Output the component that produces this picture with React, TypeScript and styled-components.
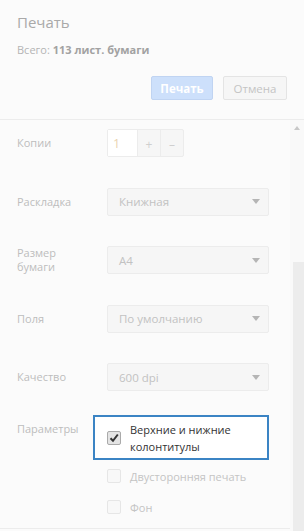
import styled, { createGlobalStyle } from "styled-components";

const GlobalStyle = createGlobalStyle`
  html, body {
    margin: 0;
    padding: 0;
    background: #fbfbfb;
    font-family: "Open Sans", "Noto Sans", sans-serif;
    overflow: hidden;
  }
`;

const Dialog = styled.div`
  width: 304px;
  height: 531px;
  display: flex;
  flex-direction: column;
  background: #fbfbfb;
`;

const Header = styled.div`
  padding: 12px 17px 0 17px;
  height: 107px;
  border-bottom: 1px solid #ececec;
`;

const Title = styled.div`
  font-size: 15px;
  color: #a9a9a9;
  line-height: 20px;
`;

const Summary = styled.div`
  margin-top: 10px;
  font-size: 11px;
  color: #b4b4b4;
  line-height: 16px;
  b {
    color: #a2a2a2;
    font-weight: 700;
  }
`;

const Actions = styled.div`
  display: flex;
  justify-content: flex-end;
  gap: 10px;
  margin-top: 18px;
`;

const Button = styled.div<{ $primary?: boolean }>`
  height: 24px;
  box-sizing: border-box;
  width: ${(p) => (p.$primary ? "62px" : "64px")};
  border-radius: 2px;
  display: flex;
  align-items: center;
  justify-content: center;
  font-size: 11.5px;
  font-weight: ${(p) => (p.$primary ? 700 : 400)};
  color: ${(p) => (p.$primary ? "#ffffff" : "#c4c4c4")};
  background: ${(p) => (p.$primary ? "#cde0fb" : "#f6f6f6")};
  border: 1px solid ${(p) => (p.$primary ? "#c0d4f2" : "#e4e4e4")};
`;

const Body = styled.div`
  flex: 1;
  display: flex;
  min-height: 0;
`;

const Content = styled.div`
  width: 290px;
  padding-top: 9px;
  border-bottom: 1px solid #ececec;
  height: 399px;
`;

const Row = styled.div<{ $top?: boolean; $gap?: number }>`
  display: grid;
  grid-template-columns: 90px 162px;
  align-items: ${(p) => (p.$top ? "start" : "center")};
  padding-left: 17px;
  min-height: 28px;
  margin-bottom: ${(p) => p.$gap ?? 30.5}px;
`;

const Label = styled.div<{ $pad?: number }>`
  font-size: 11px;
  color: #bdbdbd;
  line-height: 14px;
  padding-top: ${(p) => p.$pad ?? 0}px;
`;

const Copies = styled.div`
  display: flex;
  height: 28px;
  width: 77px;
  border: 1px solid #ececec;
  border-radius: 2px;
  box-sizing: border-box;
  background: #f6f6f6;
`;

const CopiesInput = styled.div`
  width: 30px;
  background: #ffffff;
  font-size: 12.5px;
  color: #ead3b0;
  padding-left: 5px;
  display: flex;
  align-items: center;
  box-sizing: border-box;
  border-right: 1px solid #ececec;
`;

const StepButton = styled.div<{ $last?: boolean }>`
  flex: 1;
  display: flex;
  align-items: center;
  justify-content: center;
  font-size: 12px;
  color: #cfcfcf;
  padding-top: 3px;
  border-right: ${(p) => (p.$last ? "none" : "1px solid #ececec")};
`;

const Select = styled.div`
  height: 28px;
  box-sizing: border-box;
  border: 1px solid #ececec;
  border-radius: 2px;
  background: #f6f6f6;
  display: flex;
  align-items: center;
  justify-content: space-between;
  padding: 0 8px 0 11px;
  font-size: 11.5px;
  color: #c2c2c2;
`;

const Arrow = styled.span`
  width: 0;
  height: 0;
  border-left: 4px solid transparent;
  border-right: 4px solid transparent;
  border-top: 5px solid #b5b5b5;
`;

const Options = styled.div`
  display: flex;
  flex-direction: column;
  margin-left: -14px;
`;

const Highlight = styled.div`
  border: 2px solid #3b84c4;
  background: #ffffff;
  width: 176px;
  box-sizing: border-box;
  height: 45px;
  display: flex;
  align-items: center;
  padding-left: 12px;
  gap: 9px;
`;

const Option = styled.div`
  display: flex;
  align-items: center;
  gap: 9px;
  height: 30px;
  padding-left: 14px;
  margin-top: 1px;
  font-size: 11px;
  color: #c4c4c4;
`;

const Box = styled.span<{ $checked?: boolean }>`
  width: 12px;
  height: 12px;
  flex: none;
  border: 1px solid ${(p) => (p.$checked ? "#aaaaaa" : "#e6e6e6")};
  border-radius: 2px;
  background: ${(p) => (p.$checked ? "#e4e4e4" : "#f8f8f8")};
  display: flex;
  align-items: center;
  justify-content: center;
`;

const HighlightText = styled.div`
  font-size: 11px;
  color: #333333;
  line-height: 17px;
`;

const Scrollbar = styled.div`
  width: 14px;
  background: #f9f9f9;
  display: flex;
  flex-direction: column;
  align-items: flex-end;
`;

const ScrollArrow = styled.span`
  margin: 6px 4px 0 0;
  width: 0;
  height: 0;
  border-left: 3px solid transparent;
  border-right: 3px solid transparent;
  border-bottom: 4px solid #c8c8c8;
`;

const Thumb = styled.div`
  margin-top: 132px;
  width: 11px;
  flex: 1;
  background: #ececec;
`;

function Check() {
  return (
    <svg width="10" height="10" viewBox="0 0 10 10">
      <path d="M1.5 5.2 L4 7.8 L8.8 1.5" fill="none" stroke="#333" strokeWidth="2" />
    </svg>
  );
}

function Dropdown({ value }: { value: string }) {
  return (
    <Select>
      {value}
      <Arrow />
    </Select>
  );
}

export default function App() {
  return (
    <>
      <GlobalStyle />
      <Dialog>
        <Header>
          <Title>Печать</Title>
          <Summary>
            Всего: <b>113 лист. бумаги</b>
          </Summary>
          <Actions>
            <Button $primary>Печать</Button>
            <Button>Отмена</Button>
          </Actions>
        </Header>
        <Body>
          <Content>
            <Row>
              <Label>Копии</Label>
              <Copies>
                <CopiesInput>1</CopiesInput>
                <StepButton>+</StepButton>
                <StepButton $last>–</StepButton>
              </Copies>
            </Row>
            <Row>
              <Label>Раскладка</Label>
              <Dropdown value="Книжная" />
            </Row>
            <Row>
              <Label>
                Размер
                <br />
                бумаги
              </Label>
              <Dropdown value="A4" />
            </Row>
            <Row>
              <Label>Поля</Label>
              <Dropdown value="По умолчанию" />
            </Row>
            <Row $gap={24}>
              <Label>Качество</Label>
              <Dropdown value="600 dpi" />
            </Row>
            <Row $top>
              <Label $pad={7}>Параметры</Label>
              <Options>
                <Highlight>
                  <Box $checked>
                    <Check />
                  </Box>
                  <HighlightText>
                    Верхние и нижние
                    <br />
                    колонтитулы
                  </HighlightText>
                </Highlight>
                <Option>
                  <Box />
                  Двусторонняя печать
                </Option>
                <Option>
                  <Box />
                  Фон
                </Option>
              </Options>
            </Row>
          </Content>
          <Scrollbar>
            <ScrollArrow />
            <Thumb />
          </Scrollbar>
        </Body>
      </Dialog>
    </>
  );
}
